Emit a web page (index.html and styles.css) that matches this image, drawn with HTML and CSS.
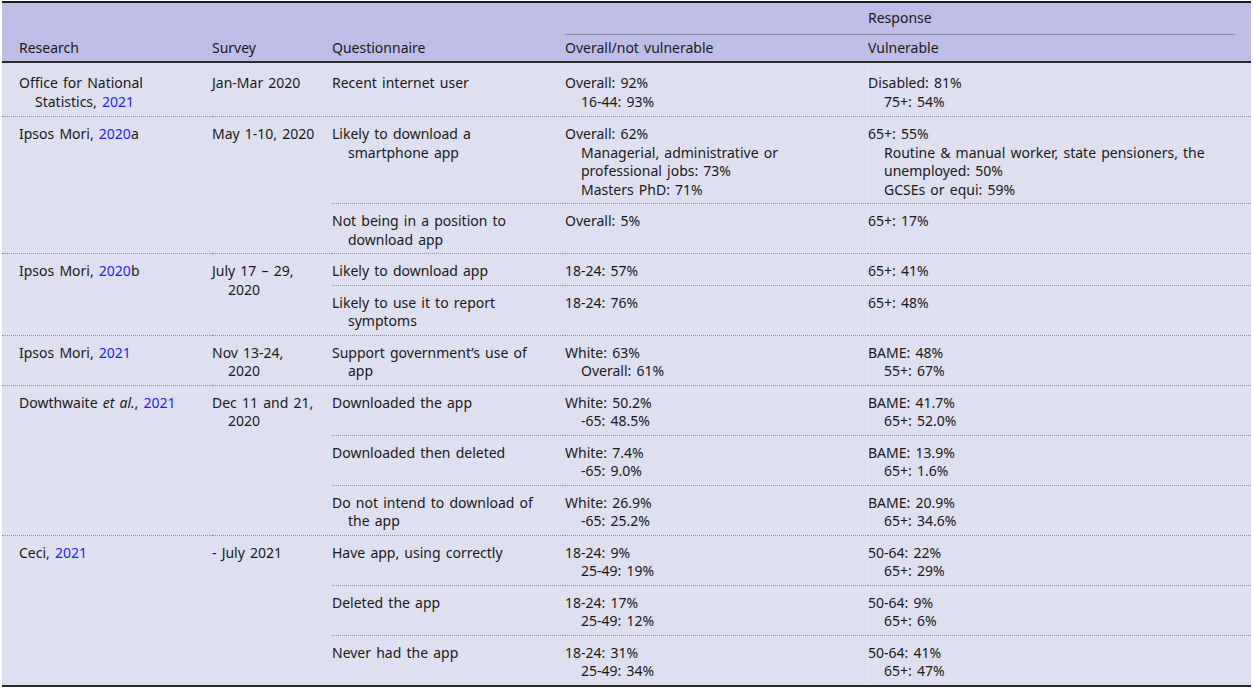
FILE: index.html
```html
<!DOCTYPE html>
<html lang="en">
<head>
<meta charset="utf-8">
<title>Table</title>
<link rel="stylesheet" href="styles.css">
</head>
<body>
<table class="data">
  <colgroup>
    <col class="c-research">
    <col class="c-survey">
    <col class="c-quest">
    <col class="c-overall">
    <col class="c-vuln">
  </colgroup>
  <thead>
    <tr class="h1">
      <th rowspan="2" class="first hb">Research</th>
      <th rowspan="2" class="hb">Survey</th>
      <th rowspan="2" class="hb">Questionnaire</th>
      <th colspan="2" class="resp"><div class="resp-line"><span></span><span>Response</span></div></th>
    </tr>
    <tr class="h2">
      <th>Overall/not vulnerable</th>
      <th>Vulnerable</th>
    </tr>
  </thead>
  <tbody>
    <tr class="grp top">
      <td class="first"><div class="hang">Office for National<br>Statistics, <a>2021</a></div></td>
      <td><div class="hang">Jan-Mar 2020</div></td>
      <td><div class="hang">Recent internet user</div></td>
      <td><div>Overall: 92%</div><div class="sub-item">16-44: 93%</div></td>
      <td class="last"><div>Disabled: 81%</div><div class="sub-item">75+: 54%</div></td>
    </tr>

    <tr class="grp">
      <td rowspan="2" class="first"><div class="hang">Ipsos Mori, <a>2020</a>a</div></td>
      <td rowspan="2"><div class="hang">May 1-10, 2020</div></td>
      <td><div class="hang">Likely to download a<br>smartphone app</div></td>
      <td><div>Overall: 62%</div><div class="sub-item">Managerial, administrative or<br>professional jobs: 73%</div><div class="sub-item">Masters PhD: 71%</div></td>
      <td class="last"><div>65+: 55%</div><div class="sub-item">Routine &amp; manual worker, state pensioners, the<br>unemployed: 50%</div><div class="sub-item">GCSEs or equi: 59%</div></td>
    </tr>
    <tr class="sub">
      <td><div class="hang">Not being in a position to<br>download app</div></td>
      <td><div>Overall: 5%</div></td>
      <td class="last"><div>65+: 17%</div></td>
    </tr>

    <tr class="grp">
      <td rowspan="2" class="first"><div class="hang">Ipsos Mori, <a>2020</a>b</div></td>
      <td rowspan="2"><div class="hang">July 17 – 29,<br>2020</div></td>
      <td><div class="hang">Likely to download app</div></td>
      <td><div>18-24: 57%</div></td>
      <td class="last"><div>65+: 41%</div></td>
    </tr>
    <tr class="sub">
      <td><div class="hang">Likely to use it to report<br>symptoms</div></td>
      <td><div>18-24: 76%</div></td>
      <td class="last"><div>65+: 48%</div></td>
    </tr>

    <tr class="grp">
      <td class="first"><div class="hang">Ipsos Mori, <a>2021</a></div></td>
      <td><div class="hang">Nov 13-24,<br>2020</div></td>
      <td><div class="hang">Support government’s use of<br>app</div></td>
      <td><div>White: 63%</div><div class="sub-item">Overall: 61%</div></td>
      <td class="last"><div>BAME: 48%</div><div class="sub-item">55+: 67%</div></td>
    </tr>

    <tr class="grp">
      <td rowspan="3" class="first"><div class="hang">Dowthwaite <i>et al.</i>, <a>2021</a></div></td>
      <td rowspan="3"><div class="hang">Dec 11 and 21,<br>2020</div></td>
      <td><div class="hang">Downloaded the app</div></td>
      <td><div>White: 50.2%</div><div class="sub-item">-65: 48.5%</div></td>
      <td class="last"><div>BAME: 41.7%</div><div class="sub-item">65+: 52.0%</div></td>
    </tr>
    <tr class="sub">
      <td><div class="hang">Downloaded then deleted</div></td>
      <td><div>White: 7.4%</div><div class="sub-item">-65: 9.0%</div></td>
      <td class="last"><div>BAME: 13.9%</div><div class="sub-item">65+: 1.6%</div></td>
    </tr>
    <tr class="sub">
      <td><div class="hang">Do not intend to download of<br>the app</div></td>
      <td><div>White: 26.9%</div><div class="sub-item">-65: 25.2%</div></td>
      <td class="last"><div>BAME: 20.9%</div><div class="sub-item">65+: 34.6%</div></td>
    </tr>

    <tr class="grp">
      <td rowspan="3" class="first"><div class="hang">Ceci, <a>2021</a></div></td>
      <td rowspan="3"><div class="hang">- July 2021</div></td>
      <td><div class="hang">Have app, using correctly</div></td>
      <td><div>18-24: 9%</div><div class="sub-item">25-49: 19%</div></td>
      <td class="last"><div>50-64: 22%</div><div class="sub-item">65+: 29%</div></td>
    </tr>
    <tr class="sub">
      <td><div class="hang">Deleted the app</div></td>
      <td><div>18-24: 17%</div><div class="sub-item">25-49: 12%</div></td>
      <td class="last"><div>50-64: 9%</div><div class="sub-item">65+: 6%</div></td>
    </tr>
    <tr class="sub">
      <td><div class="hang">Never had the app</div></td>
      <td><div>18-24: 31%</div><div class="sub-item">25-49: 34%</div></td>
      <td class="last"><div>50-64: 41%</div><div class="sub-item">65+: 47%</div></td>
    </tr>
  </tbody>
</table>
</body>
</html>
```

FILE: styles.css
```css
html, body {
  margin: 0;
  padding: 0;
  background: #ffffff;
}

body {
  padding: 1px 2px 0 2px;
  font-family: "Noto Sans", "Liberation Sans", sans-serif;
  font-size: 14px;
  line-height: 18.5px;
  color: #1a1a1a;
  word-spacing: 1.5px;
}

.data {
  width: 1249px;
  table-layout: fixed;
  border-collapse: collapse;
  border-top: 2px solid #1a1a1a;
  border-bottom: 2px solid #2a2a2a;
}

.c-research { width: 210px; }
.c-survey { width: 120px; }
.c-quest { width: 233px; }
.c-overall { width: 303px; }
.c-vuln { width: 383px; }

th, td {
  padding: 0 12px 0 0;
  text-align: left;
  vertical-align: top;
  white-space: nowrap;
}

th.first, td.first {
  padding-left: 17px;
}

thead th {
  font-weight: normal;
  background: #bdbde6;
}

thead tr.h2 th {
  padding-top: 4px;
  padding-bottom: 4px;
  border-bottom: 2px solid #2a2a2a;
}

thead th.hb {
  vertical-align: bottom;
  padding-bottom: 4px;
  border-bottom: 2px solid #2a2a2a;
}

thead th.resp {
  padding: 6px 16px 0 0;
}

.resp-line {
  display: grid;
  grid-template-columns: 303px 1fr;
  padding-bottom: 6px;
  border-bottom: 1px solid #8a8aa6;
}

tbody td {
  background: #dedff0;
  padding-top: 8px;
  padding-bottom: 4px;
}

tbody td.last {
  box-shadow: inset 1px 0 0 #e4e5f3;
}

tbody tr.top td {
  padding-top: 11px;
  padding-bottom: 5px;
}

tbody tr.grp td {
  border-top: 1px dotted #8c8c9c;
}

tbody tr.top td {
  border-top: none;
}

tbody tr.sub td {
  border-top: 1px dotted #8c8c9c;
}

.hang {
  padding-left: 16px;
  text-indent: -16px;
}

.sub-item {
  padding-left: 16px;
}

a {
  color: #1f1fe8;
  text-decoration: none;
}

i {
  font-style: italic;
}
```
